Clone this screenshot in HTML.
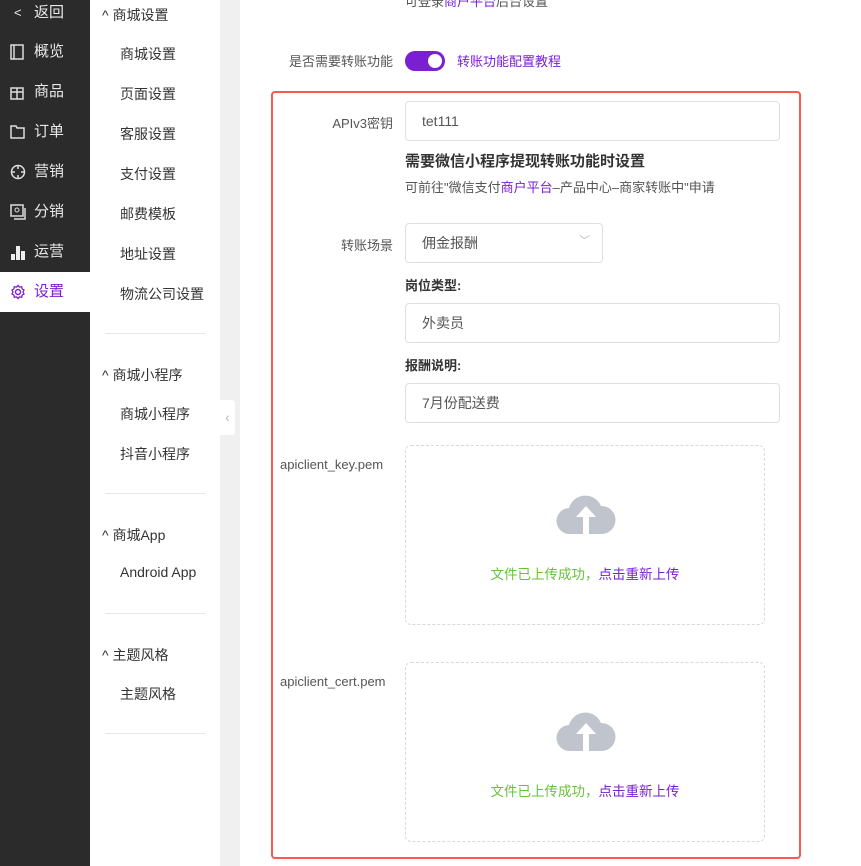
<!DOCTYPE html><html><head><meta charset="utf-8"><style>
*{margin:0;padding:0;box-sizing:border-box}
body{width:861px;height:866px;overflow:hidden;font-family:"Liberation Sans","Noto Sans CJK SC",sans-serif;background:#fff;position:relative;font-size:14px;color:#333}
.a{position:absolute}
.side{left:0;top:0;width:90px;height:866px;background:#2b2b2b}
.si{position:absolute;left:0;width:90px;height:40px;color:#e8e8e8;font-size:15px;line-height:40px;padding-left:34px}
.si svg{position:absolute;left:10px;top:12px}
.sub{left:90px;top:0;width:130px;height:866px;background:#fff}
.sh{position:absolute;left:12px;font-size:14px;color:#333}
.sm{position:absolute;left:30px;font-size:14px;color:#333}
.dv{position:absolute;left:15px;width:100px;height:1px;background:#e8e8e8}
.gap{left:220px;top:0;width:20px;height:866px;background:#f0f0f0}
.lbl{position:absolute;font-size:13px;color:#555;text-align:right;width:200px}
.inp{position:absolute;border:1px solid #dcdfe6;border-radius:4px;background:#fff;font-size:14px;color:#555;padding-left:16px;line-height:38px}
.up{position:absolute;left:405px;width:360px;height:180px;border:1px dashed #d9d9d9;border-radius:6px}
.up svg{position:absolute;left:150px;top:44px}
.up p{position:absolute;top:117px;width:100%;text-align:center;font-size:13.5px;color:#67c23a}
.up p span{color:#7a1fd1}
</style></head><body>
<div class="a side">
<div class="si" style="top:-7px"><span style="position:absolute;left:14px;font-size:13px">&lt;</span>返回</div>
<div class="si" style="top:32px"><svg width="14" height="16" viewBox="0 0 14 16"><rect x="1" y="1" width="12" height="14" fill="none" stroke="#ddd" stroke-width="1.5"/><line x1="4" y1="1" x2="4" y2="15" stroke="#ddd" stroke-width="1.5"/></svg>概览</div>
<div class="si" style="top:72px"><svg width="14" height="16" viewBox="0 0 14 16"><rect x="1" y="4" width="12" height="11" fill="none" stroke="#ddd" stroke-width="1.5"/><line x1="1" y1="8" x2="13" y2="8" stroke="#ddd" stroke-width="1.5"/><line x1="7" y1="4" x2="7" y2="15" stroke="#ddd" stroke-width="1.5"/></svg>商品</div>
<div class="si" style="top:112px"><svg width="15" height="16" viewBox="0 0 15 16"><path d="M1 2h5l1 2h7v10H1z" fill="none" stroke="#ddd" stroke-width="1.5"/></svg>订单</div>
<div class="si" style="top:152px"><svg width="16" height="16" viewBox="0 0 16 16"><circle cx="8" cy="8" r="6.5" fill="none" stroke="#ddd" stroke-width="1.5"/><path d="M8 1v4M8 11v4M1 8h4M11 8h4" stroke="#ddd" stroke-width="1.5"/></svg>营销</div>
<div class="si" style="top:192px"><svg width="16" height="16" viewBox="0 0 16 16"><rect x="1" y="1" width="12" height="11" fill="none" stroke="#ddd" stroke-width="1.5"/><circle cx="7" cy="6" r="2" fill="none" stroke="#ddd"/><path d="M4 15h11V4" fill="none" stroke="#ddd" stroke-width="1.5"/></svg>分销</div>
<div class="si" style="top:232px"><svg width="16" height="16" viewBox="0 0 16 16"><rect x="1" y="10" width="4" height="6" fill="#eee"/><rect x="6" y="2" width="4" height="14" fill="#eee"/><rect x="11" y="7" width="4" height="9" fill="#eee"/></svg>运营</div>
<div class="si" style="top:272px;background:#fff;color:#7a1fd1"><svg width="16" height="16" viewBox="0 0 16 16"><circle cx="8" cy="8" r="2.5" fill="none" stroke="#7a1fd1" stroke-width="1.4"/><path d="M8 1.5l1.5 1.6 2.2-.4.4 2.2 1.9 1.1-1 2 1 2-1.9 1.1-.4 2.2-2.2-.4L8 14.5l-1.5-1.6-2.2.4-.4-2.2-1.9-1.1 1-2-1-2 1.9-1.1.4-2.2 2.2.4z" fill="none" stroke="#7a1fd1" stroke-width="1.3"/></svg>设置</div>
</div>
<div class="a sub">
<div class="sh" style="top:5px">^ 商城设置</div>
<div class="sm" style="top:44px">商城设置</div>
<div class="sm" style="top:84px">页面设置</div>
<div class="sm" style="top:124px">客服设置</div>
<div class="sm" style="top:164px">支付设置</div>
<div class="sm" style="top:204px">邮费模板</div>
<div class="sm" style="top:244px">地址设置</div>
<div class="sm" style="top:284px">物流公司设置</div>
<div class="dv" style="top:333px"></div>
<div class="sh" style="top:365px">^ 商城小程序</div>
<div class="sm" style="top:404px">商城小程序</div>
<div class="sm" style="top:444px">抖音小程序</div>
<div class="dv" style="top:493px"></div>
<div class="sh" style="top:525px">^ 商城App</div>
<div class="sm" style="top:564px">Android App</div>
<div class="dv" style="top:613px"></div>
<div class="sh" style="top:645px">^ 主题风格</div>
<div class="sm" style="top:684px">主题风格</div>
<div class="dv" style="top:733px"></div>
</div>
<div class="a gap"><div style="position:absolute;left:0;top:400px;width:15px;height:35px;background:#fff;border-radius:0 3px 3px 0;color:#bbb;font-size:14px;line-height:35px;text-align:center">‹</div></div>
<div class="a" style="left:405px;top:-9px;font-size:13px;color:#555">可登录<span style="color:#7a1fd1">商户平台</span>后台设置</div>
<div class="lbl" style="left:193px;top:51px">是否需要转账功能</div>
<div class="a" style="left:405px;top:51px;width:40px;height:20px;border-radius:10px;background:#7a1fd1"><div style="position:absolute;right:3px;top:3px;width:14px;height:14px;border-radius:50%;background:#fff"></div></div>
<div class="a" style="left:457px;top:51px;font-size:13px;color:#7a1fd1">转账功能配置教程</div>
<div class="a" style="left:271px;top:91px;width:530px;height:768px;border:2px solid #f55a4e;border-radius:4px"></div>
<div class="lbl" style="left:193px;top:113px">APIv3密钥</div>
<div class="inp" style="left:405px;top:101px;width:375px;height:40px">tet111</div>
<div class="a" style="left:405px;top:150px;font-size:15px;font-weight:bold;color:#333">需要微信小程序提现转账功能时设置</div>
<div class="a" style="left:405px;top:177px;font-size:13px;color:#555">可前往"微信支付<span style="color:#7a1fd1">商户平台</span>–产品中心–商家转账中"申请</div>
<div class="lbl" style="left:193px;top:235px">转账场景</div>
<div class="inp" style="left:405px;top:223px;width:198px;height:40px">佣金报酬<span style="position:absolute;right:12px;top:-2px;color:#bbb;font-size:11px">﹀</span></div>
<div class="a" style="left:405px;top:275px;font-size:13px;font-weight:bold;color:#333">岗位类型:</div>
<div class="inp" style="left:405px;top:303px;width:375px;height:40px">外卖员</div>
<div class="a" style="left:405px;top:355px;font-size:13px;font-weight:bold;color:#333">报酬说明:</div>
<div class="inp" style="left:405px;top:383px;width:375px;height:40px">7月份配送费</div>
<div class="a" style="left:280px;top:457px;font-size:13px;color:#555">apiclient_key.pem</div>
<div class="up" style="top:445px"><svg width="60" height="46" viewBox="0 0 60 46"><path d="M14 44a13 13 0 0 1-1-26A17 17 0 0 1 45 16a14 14 0 0 1 1 28z" fill="#c0c4cc"/><path d="M30 16l-10 11h7v17h6V27h7z" fill="#fff"/></svg><p>文件已上传成功，<span>点击重新上传</span></p></div>
<div class="a" style="left:280px;top:674px;font-size:13px;color:#555">apiclient_cert.pem</div>
<div class="up" style="top:662px"><svg width="60" height="46" viewBox="0 0 60 46"><path d="M14 44a13 13 0 0 1-1-26A17 17 0 0 1 45 16a14 14 0 0 1 1 28z" fill="#c0c4cc"/><path d="M30 16l-10 11h7v17h6V27h7z" fill="#fff"/></svg><p>文件已上传成功，<span>点击重新上传</span></p></div>
</body></html>
